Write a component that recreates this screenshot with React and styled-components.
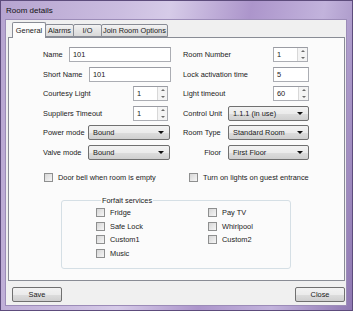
import React from 'react';
import styled, { createGlobalStyle } from 'styled-components';

const GlobalStyle = createGlobalStyle`
  html, body {
    margin: 0;
    padding: 0;
    background: #ffffff;
  }
  body {
    font-family: "Liberation Sans", Arial, sans-serif;
    font-size: 7.4px;
    color: #1a1a1a;
  }
`;

const Window = styled.div`
  width: 353px;
  height: 311px;
  box-sizing: border-box;
  display: flex;
  flex-direction: column;
  padding: 0 6px 5px 5px;
  border: 1px solid #5d4c7c;
  background: linear-gradient(100deg, #b6a4d0 0%, #cbbde0 30%, #d6cbe8 42%, #ac95cb 62%, #c2b3dc 80%, #8f78b2 100%);
`;

const TitleBar = styled.div`
  height: 19px;
  display: flex;
  align-items: center;
  padding-left: 0;
  font-size: 8px;
  color: #111;
`;

const Client = styled.div`
  flex: 1;
  display: flex;
  flex-direction: column;
  background: #f0f0f0;
  padding-top: 2px;
  box-shadow: 0 0 0 1px #9c8cb8;
`;

const TabRow = styled.div`
  height: 15px;
  display: flex;
  align-items: flex-end;
  padding-left: 4px;
  margin-left: 2px;
  position: relative;
  z-index: 1;
`;

const Tab = styled.div`
  box-sizing: border-box;
  width: ${p => p.$w}px;
  height: ${p => (p.$active ? 16 : 13)}px;
  margin-bottom: ${p => (p.$active ? -1 : 0)}px;
  margin-left: ${p => (p.$active ? 0 : -1)}px;
  display: flex;
  align-items: center;
  justify-content: center;
  padding-bottom: ${p => (p.$active ? 1 : 0)}px;
  border: 1px solid #898c95;
  border-bottom: ${p => (p.$active ? 'none' : '1px solid #898c95')};
  border-radius: 2px 2px 0 0;
  background: ${p => (p.$active ? '#fcfcfc' : 'linear-gradient(#f3f3f3, #e4e4e4 50%, #d9d9d9)')};
`;

const Panel = styled.div`
  flex: 1;
  margin: 0 1px 0 2px;
  border: 1px solid #898c95;
  background: #fbfbfb;
  padding: 9px 0 0 34px;
  display: flex;
  flex-direction: column;
`;

const Form = styled.div`
  display: flex;
  gap: 12px;
`;

const Column = styled.div`
  width: ${p => p.$w}px;
  display: flex;
  flex-direction: column;
  gap: 4.6px;
`;

const Row = styled.div`
  height: 15px;
  display: flex;
  align-items: center;
`;

const Label = styled.span`
  width: ${p => p.$w}px;
  flex-shrink: 0;
  text-align: ${p => p.$align || 'left'};
  padding-right: ${p => (p.$align === 'right' ? 7 : 0)}px;
  box-sizing: border-box;
  white-space: nowrap;
`;

const Field = styled.div`
  box-sizing: border-box;
  width: ${p => p.$w}px;
  height: 15px;
  display: flex;
  align-items: center;
  border: 1px solid #abadb3;
  border-top-color: #9a9ca3;
  background: #ffffff;
  padding-left: 3px;
`;

const SpinBox = styled(Field)`
  padding-right: 0;
  justify-content: space-between;
`;

const SpinButtons = styled.div`
  width: 9px;
  height: 100%;
  display: flex;
  flex-direction: column;
  border-left: 1px solid #d8d8d8;
`;

const SpinArrow = styled.div`
  flex: 1;
  display: flex;
  align-items: center;
  justify-content: center;
  background: #f4f4f4;
  &::after {
    content: '';
    border-left: 2px solid transparent;
    border-right: 2px solid transparent;
    border-${p => (p.$up ? 'bottom' : 'top')}: 2px solid #6a6a6a;
  }
`;

const Select = styled.div`
  box-sizing: border-box;
  width: ${p => p.$w}px;
  height: 15px;
  display: flex;
  align-items: center;
  justify-content: space-between;
  border: 1px solid #707070;
  border-radius: 2px;
  background: linear-gradient(#f2f2f2, #ebebeb 50%, #dddddd 51%, #cfcfcf);
  padding: 0 5px 0 4px;
  &::after {
    content: '';
    border-left: 3px solid transparent;
    border-right: 3px solid transparent;
    border-top: 3px solid #111;
  }
`;

const CheckLine = styled.div`
  display: flex;
  margin-top: 13px;
  height: 9px;
`;

const CheckItem = styled.label`
  display: flex;
  align-items: center;
  gap: 5px;
  height: 9px;
  width: ${p => p.$w}px;
  padding-left: ${p => p.$indent || 0}px;
  box-sizing: border-box;
  white-space: nowrap;
`;

const Box = styled.span`
  width: 9px;
  height: 9px;
  box-sizing: border-box;
  flex-shrink: 0;
  border: 1px solid #8e8f8f;
  background: linear-gradient(135deg, #d6d6d6, #f6f6f6);
`;

const Group = styled.fieldset`
  margin: 14px 0 0 18px;
  width: 230px;
  box-sizing: border-box;
  border: 1px solid #d5dfe5;
  border-radius: 3px;
  padding: 3px 0 9px 34px;
  display: grid;
  grid-template-columns: 112px 80px;
  grid-auto-flow: column;
  grid-template-rows: repeat(4, 9px);
  row-gap: 4.7px;
  height: 73px;
`;

const Legend = styled.legend`
  padding: 0 1px;
  margin-left: 5px;
  line-height: 9px;
`;

const ButtonBar = styled.div`
  display: flex;
  justify-content: space-between;
  padding: 6px 1px 3px 6px;
`;

const Button = styled.div`
  box-sizing: border-box;
  width: 50px;
  height: 15px;
  display: flex;
  align-items: center;
  justify-content: center;
  border: 1px solid #707070;
  border-radius: 2px;
  background: linear-gradient(#f2f2f2, #ebebeb 50%, #dddddd 51%, #cfcfcf);
`;

const Spin = ({ w, value }) => (
  <SpinBox $w={w}>
    <span>{value}</span>
    <SpinButtons>
      <SpinArrow $up />
      <SpinArrow />
    </SpinButtons>
  </SpinBox>
);

const Check = ({ children, w, indent }) => (
  <CheckItem $w={w} $indent={indent}>
    <Box />
    {children}
  </CheckItem>
);

export default function App() {
  return (
    <>
      <GlobalStyle />
      <Window>
        <TitleBar>Room details</TitleBar>
        <Client>
          <TabRow>
            <Tab $active $w={34}>General</Tab>
            <Tab $w={29}>Alarms</Tab>
            <Tab $w={29}>I/O</Tab>
            <Tab $w={67}>Join Room Options</Tab>
          </TabRow>
          <Panel>
            <Form>
              <Column $w={128}>
                <Row><Label $w={26}>Name</Label><Field $w={102}>101</Field></Row>
                <Row><Label $w={46}>Short Name</Label><Field $w={82}>101</Field></Row>
                <Row><Label $w={90}>Courtesy Light</Label><Spin w={35} value="1" /></Row>
                <Row><Label $w={90}>Suppliers Timeout</Label><Spin w={35} value="1" /></Row>
                <Row><Label $w={45}>Power mode</Label><Select $w={82}>Bound</Select></Row>
                <Row><Label $w={45}>Valve mode</Label><Select $w={82}>Bound</Select></Row>
              </Column>
              <Column $w={126}>
                <Row><Label $w={90}>Room Number</Label><Spin w={35} value="1" /></Row>
                <Row><Label $w={90}>Lock activation time</Label><Field $w={36}>5</Field></Row>
                <Row><Label $w={90}>Light timeout</Label><Spin w={36} value="60" /></Row>
                <Row><Label $w={45}>Control Unit</Label><Select $w={81}>1.1.1 (in use)</Select></Row>
                <Row><Label $w={45}>Room Type</Label><Select $w={81}>Standard Room</Select></Row>
                <Row><Label $w={45} $align="right">Floor</Label><Select $w={81}>First Floor</Select></Row>
              </Column>
            </Form>
            <CheckLine>
              <Check w={146} indent={1}>Door bell when room is empty</Check>
              <Check w={150}>Turn on lights on guest entrance</Check>
            </CheckLine>
            <Group>
              <Legend>Forfait services</Legend>
              <Check>Fridge</Check>
              <Check>Safe Lock</Check>
              <Check>Custom1</Check>
              <Check>Music</Check>
              <Check>Pay TV</Check>
              <Check>Whirlpool</Check>
              <Check>Custom2</Check>
            </Group>
          </Panel>
          <ButtonBar>
            <Button>Save</Button>
            <Button>Close</Button>
          </ButtonBar>
        </Client>
      </Window>
    </>
  );
}
